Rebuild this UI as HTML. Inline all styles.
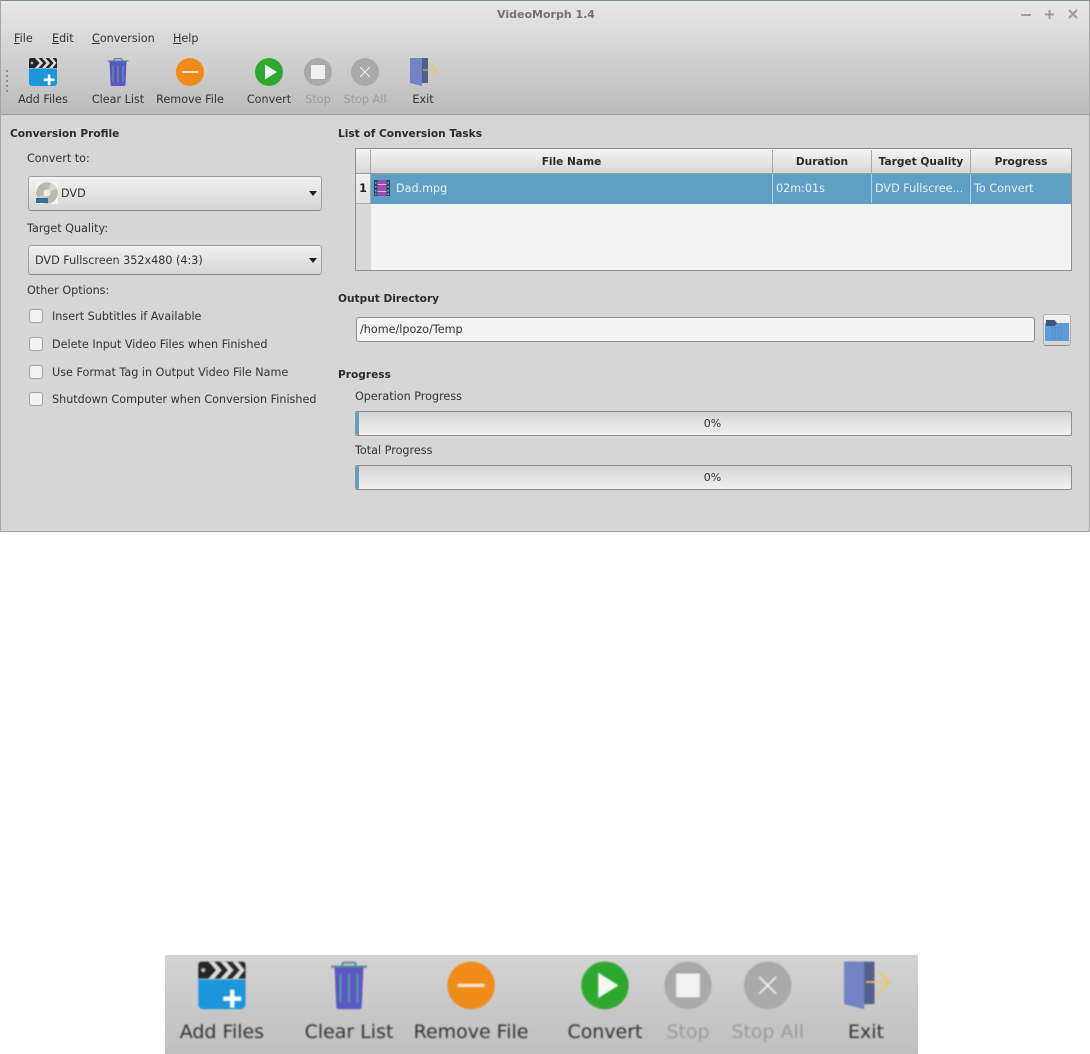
<!DOCTYPE html>
<html><head><meta charset="utf-8"><title>VideoMorph 1.4</title>
<style>
html,body{margin:0;padding:0;background:#fff;width:1090px;height:1054px;overflow:hidden}
body{position:relative;font-family:"DejaVu Sans","Liberation Sans",sans-serif;font-size:11.2px;color:#333}
.a{position:absolute}
.t{position:absolute;white-space:nowrap;line-height:16px;height:16px}
.b{font-weight:bold;font-size:10.6px;color:#2c2c2c}
.c{transform:translateX(-50%)}
u{text-decoration:underline}
#win{left:0;top:0;width:1090px;height:532px;background:#d6d6d6;overflow:hidden;box-sizing:border-box;border:1px solid #a6a6a6;border-top:1px solid #7f8c90}
#hd{left:0;top:0;width:1088px;height:113px;background:linear-gradient(#e7e7e7,#d3d3d3 45%,#bcbcbc);border-bottom:1px solid #9c9c9c}
.combo{position:absolute;left:28px;width:294px;box-sizing:border-box;border:1px solid #9f9f9f;border-bottom-color:#8a8a8a;border-radius:3px;background:linear-gradient(#f2f2f2,#d4d4d4)}
.arr{position:absolute;right:4px;width:0;height:0;border:4.5px solid transparent;border-top:5px solid #222;border-bottom:0}
.cb{position:absolute;left:29px;width:14px;height:14px;box-sizing:border-box;border:1px solid #a3a3a3;border-radius:3px;background:#f1f1f1}
.pb{position:absolute;left:355px;width:717px;height:25px;box-sizing:border-box;border:1px solid #8f8f8f;border-radius:2px;background:linear-gradient(#d3d3d3,#f1f1f1);text-align:center;line-height:23px;font-size:11px;color:#333;padding-right:2px}
.pb i{position:absolute;left:0;top:0;width:3px;height:23px;background:#5f9fc5;border-radius:2px 0 0 2px}
.hc{position:absolute;top:1px;height:23px;line-height:24px;text-align:center;font-weight:bold;font-size:10.6px;color:#2b2b2b;border-right:1px solid #aaa;box-sizing:border-box}
.rc{position:absolute;top:0;height:29px;line-height:29px;color:#e8f1f6;padding-left:3px;box-sizing:border-box;border-right:1px solid #b9cfdc;white-space:nowrap;overflow:hidden}
#zoom{left:165px;top:955px;width:753px;height:99px;overflow:hidden;background:linear-gradient(#d3d3d3,#bfbfbf)}
#zi{position:absolute;left:-16px;top:-92.4px;width:440px;height:60px;transform-origin:0 0;transform:scale(1.695,1.7);filter:blur(.45px)}
</style></head><body>
<svg width="0" height="0" style="position:absolute">
<symbol id="i-add" viewBox="0 0 28 28"><path d="M2 0H26a2 2 0 0 1 2 2V10H0V2a2 2 0 0 1 2-2z" fill="#262626"/><path d="M6 0h3.500l4.500 5-4.500 5H6l4.500-5zM13 0h3.500l4.500 5-4.500 5H13l4.500-5zM20 0h3.500l4 5-4 5H20l4.500-5z" fill="#dcdcdc"/><circle cx="3" cy="5" r="1.300" fill="#bbb"/><path d="M0 10.500H28V25a3 3 0 0 1-3 3H3a3 3 0 0 1-3-3z" fill="#1b96dc"/><path d="M18.800 16.500h2.600v4h4v2.600h-4v4h-2.600v-4h-4v-2.600h4z" fill="#fff"/></symbol>
<symbol id="i-trash" viewBox="0 0 28 28"><path d="M3.500 3H24.500" stroke="#4f8b94" stroke-width="1.200"/><path d="M10 3V1.800Q10 .6 11.500 .6H16.500Q18 .6 18 1.800V3" fill="none" stroke="#4f8b94" stroke-width="1.200"/><path d="M5.500 3.500H22.500L21.500 26.500Q21.400 28 20 28H8Q6.600 28 6.500 26.500z" fill="#5b57c2"/><path d="M9 7.500V24M14 7.500V24M19 7.500V24" stroke="#5aa59b" stroke-width="1.100"/></symbol>
<symbol id="i-rem" viewBox="0 0 28 28"><circle cx="14" cy="14" r="14" fill="#ee8b1a"/><rect x="6" y="13" width="16" height="2" fill="#f6e3c7"/></symbol>
<symbol id="i-conv" viewBox="0 0 28 28"><circle cx="14" cy="14" r="14" fill="#2ea82f"/><path d="M10 6.500L22 14 10 21.500z" fill="#f4f8f3"/></symbol>
<symbol id="i-stop" viewBox="0 0 28 28"><circle cx="14" cy="14" r="14" fill="#a9a9a9"/><rect x="7" y="7" width="14" height="14" fill="#f1f1f1"/></symbol>
<symbol id="i-stopall" viewBox="0 0 28 28"><circle cx="14" cy="14" r="14" fill="#a9a9a9"/><path d="M9 9L19 19M19 9L9 19" stroke="#efefef" stroke-width="1.100"/></symbol>
<symbol id="i-exit" viewBox="0 0 28 28"><rect x="0" y="0" width="18" height="25" fill="#525e8c"/><path d="M0 0H12V28L0 25z" fill="#7284c4"/><path d="M13 12H27M20 5.300L27 12 20 19" fill="none" stroke="#ecc85f" stroke-width="1.100"/></symbol>
</svg>

<div id="win" class="a">
<div id="hd" class="a"></div>
</div>

<div class="t c" style="left:546px;top:7px;font-weight:bold;font-size:11px;color:#737373">VideoMorph 1.4</div>
<svg class="a" style="left:1016px;top:6px" width="70" height="16"><path d="M5 9H15" stroke="#9c9c9c" stroke-width="2"/><path d="M29 8.500H38M33.500 4V13" stroke="#9c9c9c" stroke-width="2"/><path d="M53 4L61 12M61 4L53 12" stroke="#9c9c9c" stroke-width="2"/></svg>

<div class="t" style="left:14px;top:31px"><u>F</u>ile</div>
<div class="t" style="left:52px;top:31px"><u>E</u>dit</div>
<div class="t" style="left:92px;top:31px"><u>C</u>onversion</div>
<div class="t" style="left:173px;top:31px"><u>H</u>elp</div>

<svg class="a" style="left:6px;top:70px" width="4" height="26"><g fill="#8b8b8b"><rect x="0" y="0" width="2" height="2"/><rect x="0" y="5" width="2" height="2"/><rect x="0" y="10" width="2" height="2"/><rect x="0" y="15" width="2" height="2"/><rect x="0" y="20" width="2" height="2"/></g></svg>

<svg class="a" style="left:29px;top:58px" width="28" height="28"><use href="#i-add"/></svg>
<svg class="a" style="left:104px;top:58px" width="28" height="28"><use href="#i-trash"/></svg>
<svg class="a" style="left:176px;top:58px" width="28" height="28"><use href="#i-rem"/></svg>
<svg class="a" style="left:255px;top:58px" width="28" height="28"><use href="#i-conv"/></svg>
<svg class="a" style="left:304px;top:58px" width="28" height="28"><use href="#i-stop"/></svg>
<svg class="a" style="left:351px;top:58px" width="28" height="28"><use href="#i-stopall"/></svg>
<svg class="a" style="left:410px;top:58px" width="28" height="28"><use href="#i-exit"/></svg>
<div class="t c" style="left:43px;top:92px">Add Files</div>
<div class="t c" style="left:118px;top:92px">Clear List</div>
<div class="t c" style="left:190px;top:92px">Remove File</div>
<div class="t c" style="left:269px;top:92px">Convert</div>
<div class="t c" style="left:318px;top:92px;color:#9a9a9a">Stop</div>
<div class="t c" style="left:365px;top:92px;color:#9a9a9a">Stop All</div>
<div class="t c" style="left:423px;top:92px">Exit</div>

<div class="t b" style="left:10px;top:126px">Conversion Profile</div>
<div class="t" style="left:27px;top:151px">Convert to:</div>
<div class="combo" style="top:176px;height:35px"><div class="arr" style="top:14px"></div></div>
<svg class="a" style="left:36px;top:182px" width="22" height="22"><rect width="22" height="22" fill="#f4f4f4"/><circle cx="11" cy="11" r="10.800" fill="#bdb7aa"/><path d="M11 11L21 6A10.800 10.800 0 0 0 15 1z" fill="#dedad0"/><path d="M11 11L1 16A10.800 10.800 0 0 0 7 21z" fill="#d2cec4"/><circle cx="11" cy="11" r="3.500" fill="#eeeeee"/><rect x="0" y="16" width="12" height="5" fill="#2f6f98"/></svg>
<div class="t" style="left:61px;top:186px">DVD</div>
<div class="t" style="left:27px;top:221px">Target Quality:</div>
<div class="combo" style="top:245px;height:30px"><div class="arr" style="top:12px"></div></div>
<div class="t" style="left:35px;top:253px">DVD Fullscreen 352x480 (4:3)</div>
<div class="t" style="left:27px;top:283px">Other Options:</div>

<div class="cb" style="top:309px"></div><div class="t" style="left:52px;top:309px">Insert Subtitles if Available</div>
<div class="cb" style="top:337px"></div><div class="t" style="left:52px;top:337px">Delete Input Video Files when Finished</div>
<div class="cb" style="top:365px"></div><div class="t" style="left:52px;top:365px">Use Format Tag in Output Video File Name</div>
<div class="cb" style="top:392px"></div><div class="t" style="left:52px;top:392px">Shutdown Computer when Conversion Finished</div>

<div class="t b" style="left:338px;top:126px">List of Conversion Tasks</div>
<div class="a" style="left:355px;top:148px;width:717px;height:123px;box-sizing:border-box;border:1px solid #8f8f8f;background:#f3f3f3">
  <div class="a" style="left:0;top:0;width:15px;height:121px;background:#d8d8d8"></div>
  <div class="a" style="left:0;top:0;width:715px;height:25px;background:linear-gradient(#f5f5f5,#d6d6d6);border-bottom:1px solid #9c9c9c;box-sizing:border-box">
    <div class="hc" style="left:0;width:15px"></div>
    <div class="hc" style="left:15px;width:402px">File Name</div>
    <div class="hc" style="left:417px;width:99px">Duration</div>
    <div class="hc" style="left:516px;width:99px">Target Quality</div>
    <div class="hc" style="left:615px;width:100px;border-right:0">Progress</div>
  </div>
  <div class="a" style="left:0;top:25px;width:14px;height:29px;line-height:29px;text-align:center;font-weight:bold;background:linear-gradient(#f0f0f0,#e2e2e2);border-bottom:1px solid #aaa;border-right:1px solid #aaa;color:#222">1</div>
  <div class="a" style="left:15px;top:25px;width:700px;height:30px;background:#5f9fc5">
    <div class="rc" style="left:0;width:402px;padding-left:25px">Dad.mpg</div>
    <div class="rc" style="left:402px;width:99px">02m:01s</div>
    <div class="rc" style="left:501px;width:99px">DVD Fullscree...</div>
    <div class="rc" style="left:600px;width:100px;border-right:0">To Convert</div>
  </div>
  <svg class="a" style="left:18px;top:31px" width="16" height="16"><rect width="16" height="16" fill="#274a5c"/><rect x="3.500" y="0" width="9" height="16" fill="#9a4fb4"/><path d="M3.500 4.500H12.500M3.500 11.500H12.500" stroke="#d9b8e4" stroke-width="1"/><g fill="#7fb0c4"><rect x="1" y="2" width="1.500" height="1.500"/><rect x="1" y="6" width="1.500" height="1.500"/><rect x="1" y="10" width="1.500" height="1.500"/><rect x="1" y="13.500" width="1.500" height="1.500"/><rect x="13.500" y="2" width="1.500" height="1.500"/><rect x="13.500" y="6" width="1.500" height="1.500"/><rect x="13.500" y="10" width="1.500" height="1.500"/><rect x="13.500" y="13.500" width="1.500" height="1.500"/></g></svg>
</div>

<div class="t b" style="left:338px;top:291px">Output Directory</div>
<div class="a" style="left:356px;top:317px;width:679px;height:25px;box-sizing:border-box;border:1px solid #8f8f8f;border-radius:3px;background:#f3f3f3"></div>
<div class="t" style="left:360px;top:322px">/home/lpozo/Temp</div>
<div class="a" style="left:1043px;top:314px;width:28px;height:32px;box-sizing:border-box;border:1px solid #b0b0b0;border-bottom-color:#8f8f8f;border-radius:3px;background:linear-gradient(#f2f2f2,#d4d4d4)"></div>
<svg class="a" style="left:1045px;top:320px" width="24" height="22"><path d="M0 3H24V21H0z" fill="#5e9bdc"/><path d="M1 0H9.500L12 3 9.500 6H1z" fill="#3f5578"/><rect x="7" y="7.500" width="10" height="11" fill="none" stroke="#5a8cc2" stroke-width="1"/><path d="M10 7.500V18.500M14 7.500V18.500M10 13H14" stroke="#5a8cc2" stroke-width="1"/></svg>

<div class="t b" style="left:338px;top:367px">Progress</div>
<div class="t" style="left:355px;top:389px">Operation Progress</div>
<div class="pb" style="top:411px"><i></i>0%</div>
<div class="t" style="left:355px;top:443px">Total Progress</div>
<div class="pb" style="top:465px"><i></i>0%</div>

<div id="zoom" class="a"><div id="zi">
<svg class="a" style="left:29px;top:58px" width="28" height="28"><use href="#i-add"/></svg>
<svg class="a" style="left:104px;top:58px" width="28" height="28"><use href="#i-trash"/></svg>
<svg class="a" style="left:176px;top:58px" width="28" height="28"><use href="#i-rem"/></svg>
<svg class="a" style="left:255px;top:58px" width="28" height="28"><use href="#i-conv"/></svg>
<svg class="a" style="left:304px;top:58px" width="28" height="28"><use href="#i-stop"/></svg>
<svg class="a" style="left:351px;top:58px" width="28" height="28"><use href="#i-stopall"/></svg>
<svg class="a" style="left:410px;top:58px" width="28" height="28"><use href="#i-exit"/></svg>
<div class="t c" style="left:43px;top:92px">Add Files</div>
<div class="t c" style="left:118px;top:92px">Clear List</div>
<div class="t c" style="left:190px;top:92px">Remove File</div>
<div class="t c" style="left:269px;top:92px">Convert</div>
<div class="t c" style="left:318px;top:92px;color:#9a9a9a">Stop</div>
<div class="t c" style="left:365px;top:92px;color:#9a9a9a">Stop All</div>
<div class="t c" style="left:423px;top:92px">Exit</div>
</div></div>
</body></html>
